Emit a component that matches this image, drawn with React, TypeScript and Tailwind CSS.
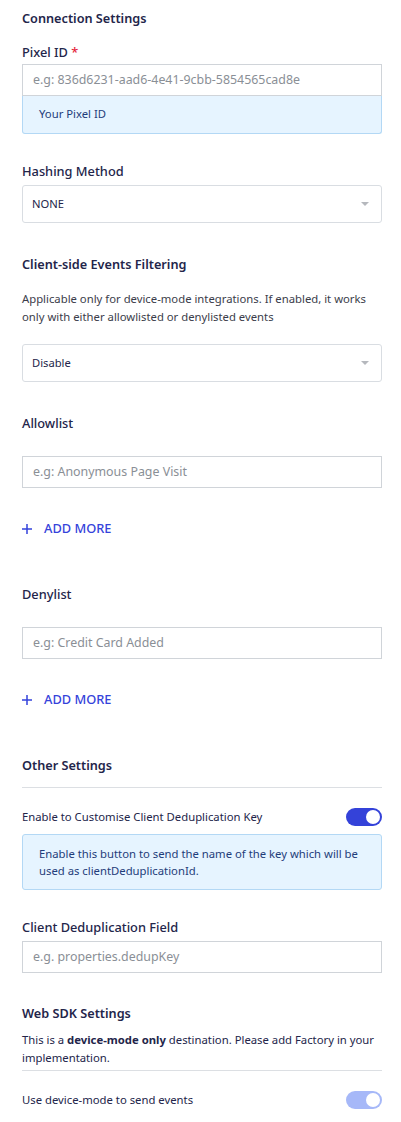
const font = { fontFamily: "'Noto Sans', sans-serif" }

function Label({ children }: { children: React.ReactNode }) {
  return <div className="text-[12.8px] font-medium leading-5 text-[#23254a]">{children}</div>
}

function Heading({ children }: { children: React.ReactNode }) {
  return <div className="text-[12.7px] font-semibold leading-5 text-[#23254a]">{children}</div>
}

function TextInput({ placeholder }: { placeholder: string }) {
  return (
    <div className="flex h-[32px] items-center border border-[#d0d4d9] bg-white px-[10px] text-[12.4px] text-[#8a8f96]">
      {placeholder}
    </div>
  )
}

function Select({ value }: { value: string }) {
  return (
    <div className="flex h-[38px] items-center justify-between rounded-[3px] border border-[#d9dde2] bg-white pl-[9px] pr-[12px] text-[11.2px] text-[#23254a]">
      <span>{value}</span>
      <span className="h-0 w-0 border-x-[4px] border-t-[4px] border-x-transparent border-t-[#b5b8bd]" />
    </div>
  )
}

function AddMore() {
  return (
    <div className="flex items-center gap-[12px] text-[12.8px] font-medium text-[#3543db]">
      <svg width="10" height="10" viewBox="0 0 10 10" className="shrink-0">
        <path d="M5 0v10M0 5h10" stroke="currentColor" strokeWidth="1.5" />
      </svg>
      <span>ADD MORE</span>
    </div>
  )
}

function Toggle({ light }: { light?: boolean }) {
  return (
    <div
      className={`flex h-[18px] w-[36px] items-center justify-end rounded-full pr-[2px] ${
        light ? 'bg-[#a6b8f8]' : 'bg-[#3442d9]'
      }`}
    >
      <div className="h-[14px] w-[14px] rounded-full bg-white" />
    </div>
  )
}

export default function App() {
  return (
    <div className="min-h-[1122px] w-[401px] bg-white pl-[22px] pr-[19px] pt-[8px] pb-4" style={font}>
      <Heading>Connection Settings</Heading>

      <div className="mt-[14px]">
        <Label>
          Pixel ID <span className="text-[#e5243b]">*</span>
        </Label>
        <div className="mt-[2px]">
          <TextInput placeholder="e.g: 836d6231-aad6-4e41-9cbb-5854565cad8e" />
          <div className="flex h-[38px] items-center rounded-b-[3px] border border-t-0 border-[#b3d8f5] bg-[#e6f4ff] px-[16px] text-[11.3px] text-[#1f3d7a]">
            Your Pixel ID
          </div>
        </div>
      </div>

      <div className="mt-[27px]">
        <Label>Hashing Method</Label>
        <div className="mt-[4px]">
          <Select value="NONE" />
        </div>
      </div>

      <div className="mt-[31px]">
        <Heading>Client-side Events Filtering</Heading>
        <p className="mt-[16px] text-[11.3px] leading-[18px] text-[#3b3d4a]">
          Applicable only for device-mode integrations. If enabled, it works only with either allowlisted or
          denylisted events
        </p>
        <div className="mt-[18px]">
          <Select value="Disable" />
        </div>
      </div>

      <div className="mt-[31px]">
        <Label>Allowlist</Label>
        <div className="mt-[23px]">
          <TextInput placeholder="e.g: Anonymous Page Visit" />
        </div>
        <div className="mt-[31px]">
          <AddMore />
        </div>
      </div>

      <div className="mt-[46px]">
        <Label>Denylist</Label>
        <div className="mt-[23px]">
          <TextInput placeholder="e.g: Credit Card Added" />
        </div>
        <div className="mt-[31px]">
          <AddMore />
        </div>
      </div>

      <div className="mt-[46px]">
        <Heading>Other Settings</Heading>
        <div className="mt-[12px] border-t border-[#dcdfe3]" />
        <div className="mt-[20px] flex items-center justify-between">
          <span className="text-[11.3px] text-[#23254a]">Enable to Customise Client Deduplication Key</span>
          <Toggle />
        </div>
        <div className="mt-[8px] rounded-[3px] border border-[#b3d8f5] bg-[#e6f4ff] px-[16px] py-[10px] text-[11.3px] leading-[17px] text-[#1f3d7a]">
          Enable this button to send the name of the key which will be used as clientDeduplicationId.
        </div>
      </div>

      <div className="mt-[27px]">
        <Label>Client Deduplication Field</Label>
        <div className="mt-[4px]">
          <TextInput placeholder="e.g. properties.dedupKey" />
        </div>
      </div>

      <div className="mt-[30px]">
        <Heading>Web SDK Settings</Heading>
        <p className="mt-[8px] text-[11.3px] leading-[18px] text-[#23254a]">
          This is a <span className="font-bold">device-mode only</span> destination. Please add Factory in your
          implementation.
        </p>
        <div className="mt-[3px] border-t border-[#dcdfe3]" />
        <div className="mt-[20px] flex items-center justify-between">
          <span className="text-[11.3px] text-[#23254a]">Use device-mode to send events</span>
          <Toggle light />
        </div>
      </div>
    </div>
  )
}
